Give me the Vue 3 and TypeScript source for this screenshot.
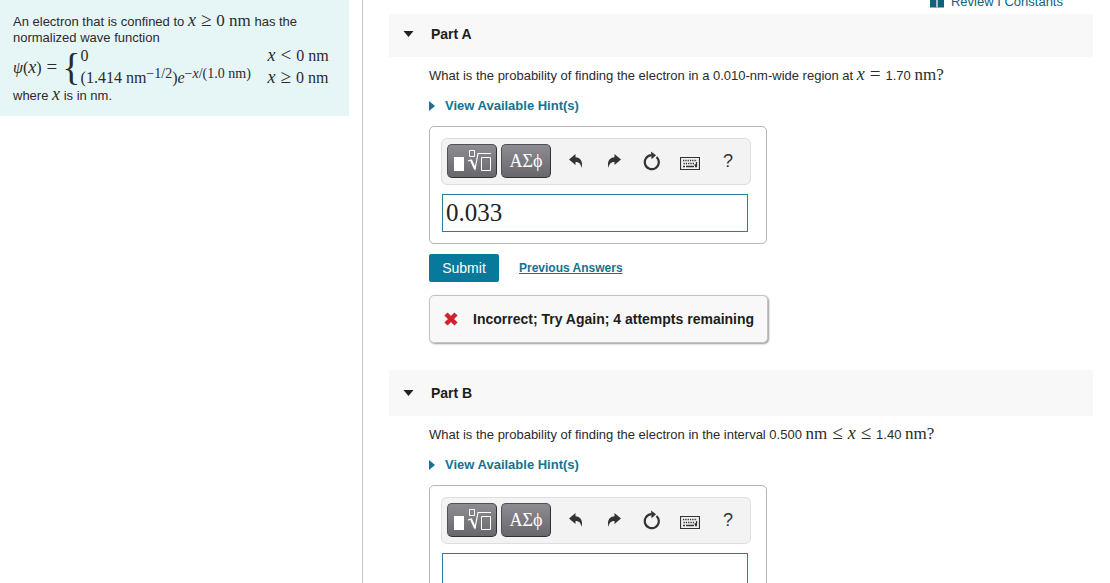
<script setup lang="ts">
import { ref } from 'vue'

interface Token {
  kind: 'text' | 'unit' | 'var' | 'op'
  value: string
}

interface Part {
  id: string
  title: string
  question: Token[]
  feedback?: string
}

const parts: Part[] = [
  {
    id: 'a',
    title: 'Part A',
    question: [
      { kind: 'text', value: 'What is the probability of finding the electron in a 0.010-nm-wide region at ' },
      { kind: 'var', value: 'x' },
      { kind: 'op', value: '=' },
      { kind: 'text', value: '1.70 ' },
      { kind: 'unit', value: 'nm?' },
    ],
    feedback: 'Incorrect; Try Again; 4 attempts remaining',
  },
  {
    id: 'b',
    title: 'Part B',
    question: [
      { kind: 'text', value: 'What is the probability of finding the electron in the interval 0.500 ' },
      { kind: 'unit', value: 'nm' },
      { kind: 'op', value: '≤' },
      { kind: 'var', value: 'x' },
      { kind: 'op', value: '≤' },
      { kind: 'text', value: '1.40 ' },
      { kind: 'unit', value: 'nm?' },
    ],
  },
]

const answers = ref<Record<string, string>>({ a: '0.033', b: '' })
</script>

<template>
  <div class="page">
    <aside class="side">
      <div class="problem">
        <p>
          An electron that is confined to <span class="var">x</span><span class="op">≥</span><span class="unit">0 nm</span> has the<br />normalized wave function
        </p>
        <div class="equation">
          <span class="lhs"><i>ψ</i>(<span class="var">x</span>)<span class="op">=</span></span>
          <span class="brace">{</span>
          <div class="cases">
            <span>0</span>
            <span><span class="var">x</span><span class="op">&lt;</span>0 nm</span>
            <span>(1.414 nm<sup>−1/2</sup>)<i>e</i><sup>−<i>x</i>/(1.0 nm)</sup></span>
            <span><span class="var">x</span><span class="op">≥</span>0 nm</span>
          </div>
        </div>
        <p>where <span class="var">x</span> is in nm.</p>
      </div>
    </aside>

    <main class="main">
      <nav class="topbar">
        <svg class="book" viewBox="0 0 14 12" aria-hidden="true">
          <path d="M0 0h6.4v11.2L5.5 10.500H0zM7.600 0H14v10.500H8.500l-.9.700z" fill="#12617a" />
        </svg>
        <span><a href="#review">Review</a> I <a href="#constants">Constants</a></span>
      </nav>

      <section v-for="part in parts" :key="part.id" class="part">
        <header class="part-head">
          <svg class="caret" viewBox="0 0 10 6" aria-hidden="true"><path d="M0 0h10L5 6z" fill="#222" /></svg>
          <h2>{{ part.title }}</h2>
        </header>
        <div class="part-body">
          <label class="question" :for="'answer-' + part.id"><span v-for="(t, i) in part.question" :key="i" :class="t.kind">{{ t.value }}</span></label>
          <button type="button" class="hint">
            <svg viewBox="0 0 6 10" aria-hidden="true"><path d="M0 0l6 5-6 5z" fill="#147391" /></svg>
            View Available Hint(s)
          </button>

          <div class="editor">
            <div class="toolbar">
              <button type="button" class="palette" aria-label="Templates">
                <svg width="38" height="24" viewBox="0 0 38 24" fill="none" stroke="#fff" aria-hidden="true">
                  <path d="M1 8h10v14H1z" fill="#fff" stroke="none" />
                  <path d="M16.500 1.500h5v6h-5z" />
                  <path d="M15 12l3-1 4 9 3-15.500H38" stroke-width="1.200" />
                  <path d="M18 11l4 9" stroke-width="2" />
                  <path d="M28.500 8.500h9v13h-9z" />
                </svg>
              </button>
              <button type="button" class="palette greek">ΑΣϕ</button>
              <div class="tools">
                <button type="button" aria-label="Undo">
                  <svg width="14" height="14" viewBox="0 0 14 14" aria-hidden="true">
                    <path d="M0 5.500L6.500 0v3.200C11.500 3.500 14.500 8 12.300 14 12 10.200 10.500 8 6.500 8v3z" fill="#333" />
                  </svg>
                </button>
                <button type="button" aria-label="Redo">
                  <svg width="14" height="14" viewBox="0 0 14 14" aria-hidden="true">
                    <path d="M14 5.500L7.500 0v3.200C2.500 3.500-.5 8 1.700 14 2 10.200 3.500 8 7.500 8v3z" fill="#333" />
                  </svg>
                </button>
                <button type="button" aria-label="Reset">
                  <svg width="18" height="20" viewBox="0 0 18 20" fill="none" aria-hidden="true">
                    <path d="M13.500 6A7 7 0 1 1 8.500 4.200" stroke="#333" stroke-width="2.200" />
                    <path d="M8 0.500l5 3.800-4.500 4z" fill="#333" />
                  </svg>
                </button>
                <button type="button" aria-label="Keyboard">
                  <svg class="keyboard" width="20" height="13" viewBox="0 0 20 13" fill="none" stroke="#333" aria-hidden="true">
                    <path d="M.5.500h19v12H.5z" stroke-width="1.200" />
                    <path d="M3 3.500h14M3.500 6.500h11" stroke-width="1.500" stroke-dasharray="1.300 1" />
                    <path d="M3 9.500h2M6 9.500h8M15 9.500h2M16.500 5v3h-2" stroke-width="1.300" />
                  </svg>
                </button>
                <button type="button" class="help" aria-label="Help">?</button>
              </div>
            </div>
            <input :id="'answer-' + part.id" v-model="answers[part.id]" type="text" class="answer" />
          </div>

          <div class="actions">
            <button type="button" class="submit">Submit</button>
            <a v-if="part.feedback" href="#previous" class="previous">Previous Answers</a>
          </div>

          <div v-if="part.feedback" class="feedback" role="status">
            <svg width="16" height="14" viewBox="0 0 16 14" aria-hidden="true">
              <path d="M3 2l10 10M13 2l-10 10" stroke="#d3222f" stroke-width="4.500" />
            </svg>
            {{ part.feedback }}
          </div>
        </div>
      </section>
    </main>
  </div>
</template>

<style>
body {
  margin: 0;
  background: #fff;
}
</style>

<style scoped>
.page {
  display: flex;
  height: 100vh;
  overflow: hidden;
  font-family: "Liberation Sans", Arial, sans-serif;
  font-size: 13px;
  line-height: 16px;
  color: #2b2b2b;
}
button {
  font-family: inherit;
  padding: 0;
  border: 0;
  background: none;
  cursor: pointer;
}
svg {
  flex: none;
}
.side {
  flex: none;
  width: 349px;
  padding-right: 13px;
  border-right: 1px solid #c3c9cd;
}
.problem {
  background: #e6f6f7;
  padding: 14px 13px 12px;
}
.problem p {
  margin: 0;
  white-space: nowrap;
}
.unit,
.var,
.op,
.equation {
  font-family: "Liberation Serif", "Times New Roman", serif;
  font-size: 16px;
  line-height: 1px;
}
.unit {
  font-size: 17px;
}
.var {
  font-style: italic;
  font-size: 18px;
}
.op {
  font-size: 19px;
  margin: 0 5px;
}
.equation {
  display: flex;
  align-items: center;
  height: 42px;
  white-space: nowrap;
}
.brace {
  font-size: 38px;
  line-height: 40px;
}
.cases {
  display: grid;
  grid-template-columns: 187px auto;
  line-height: 22px;
}
.cases sup {
  font-size: 14px;
  line-height: 1px;
  vertical-align: 5px;
}
.main {
  flex: 1;
  min-width: 0;
  padding: 0 17px 0 26px;
}
.topbar {
  position: relative;
  z-index: 1;
  display: flex;
  align-items: flex-end;
  justify-content: flex-end;
  gap: 7px;
  height: 14px;
  margin-bottom: -3px;
  padding: 0 30px 4px 0;
  box-sizing: border-box;
  background: #fff;
  color: #12617a;
}
.topbar a {
  color: inherit;
  text-decoration: none;
}
.book {
  width: 14px;
  height: 14px;
}
.part-head {
  display: flex;
  align-items: center;
  gap: 17px;
  height: 46px;
  padding-left: 14px;
  background: #f8f8f8;
}
.caret {
  width: 11px;
  height: 6px;
}
.part-head h2 {
  margin: 0;
  font-size: 14px;
  color: #1d1d1d;
}
.part-body {
  display: flex;
  flex-direction: column;
  align-items: flex-start;
  padding: 11px 0 27px 40px;
}
.question {
  white-space: pre;
}
.hint {
  display: flex;
  align-items: center;
  gap: 10px;
  margin: 14px 0 12px;
  font-size: 13px;
  line-height: 16px;
  font-weight: bold;
  color: #147391;
}
.hint svg {
  width: 6px;
  height: 10px;
}
.editor {
  box-sizing: border-box;
  width: 338px;
  padding: 11px 15px 11px 11px;
  border: 1px solid #b5b5b5;
  border-radius: 5px;
}
.toolbar {
  display: flex;
  align-items: flex-start;
  gap: 4px;
  box-sizing: border-box;
  height: 47px;
  padding: 5px;
  border: 1px solid #dedede;
  border-radius: 6px;
  background: #f3f3f3;
}
.palette {
  display: flex;
  align-items: center;
  justify-content: center;
  flex: none;
  box-sizing: border-box;
  width: 50px;
  height: 34px;
  border: 1px solid #505054;
  border-right-color: #303033;
  border-bottom-color: #303033;
  border-radius: 5px;
  background: linear-gradient(#8c8c92, #68686c);
  color: #fff;
}
.greek {
  font-family: "Liberation Serif", "Times New Roman", serif;
  font-size: 18px;
}
.tools {
  display: grid;
  flex: 1;
  grid-template-columns: repeat(5, 38px);
  height: 34px;
  margin-left: 2px;
}
.tools button {
  display: flex;
  align-items: center;
  justify-content: center;
}
.keyboard {
  margin-top: 4px;
}
.tools .help {
  font-size: 18px;
  color: #333;
}
.answer {
  display: block;
  box-sizing: border-box;
  width: calc(100% - 4px);
  height: 38px;
  margin: 9px 0 0 1px;
  padding: 0 3px;
  border: 1px solid #26809a;
  border-radius: 0;
  outline: 0;
  background: #fff;
  font-family: "Liberation Serif", "Times New Roman", serif;
  font-size: 25px;
  color: #222;
}
.actions {
  display: flex;
  align-items: center;
  gap: 20px;
  margin: 10px 0 13px;
}
.submit {
  width: 70px;
  height: 28px;
  border-radius: 2px;
  background: #077a9b;
  color: #fff;
  font-size: 14px;
}
.previous {
  font-size: 12px;
  font-weight: bold;
  color: #147391;
}
.feedback {
  display: flex;
  align-items: center;
  gap: 14px;
  box-sizing: border-box;
  width: 339px;
  height: 48px;
  padding-left: 13px;
  border: 1px solid #c4c4c4;
  border-radius: 5px;
  box-shadow: 1px 1px 2px #999;
  background: #f8f8f8;
  font-size: 14px;
  font-weight: bold;
  color: #1d1d1d;
  white-space: nowrap;
}
</style>
